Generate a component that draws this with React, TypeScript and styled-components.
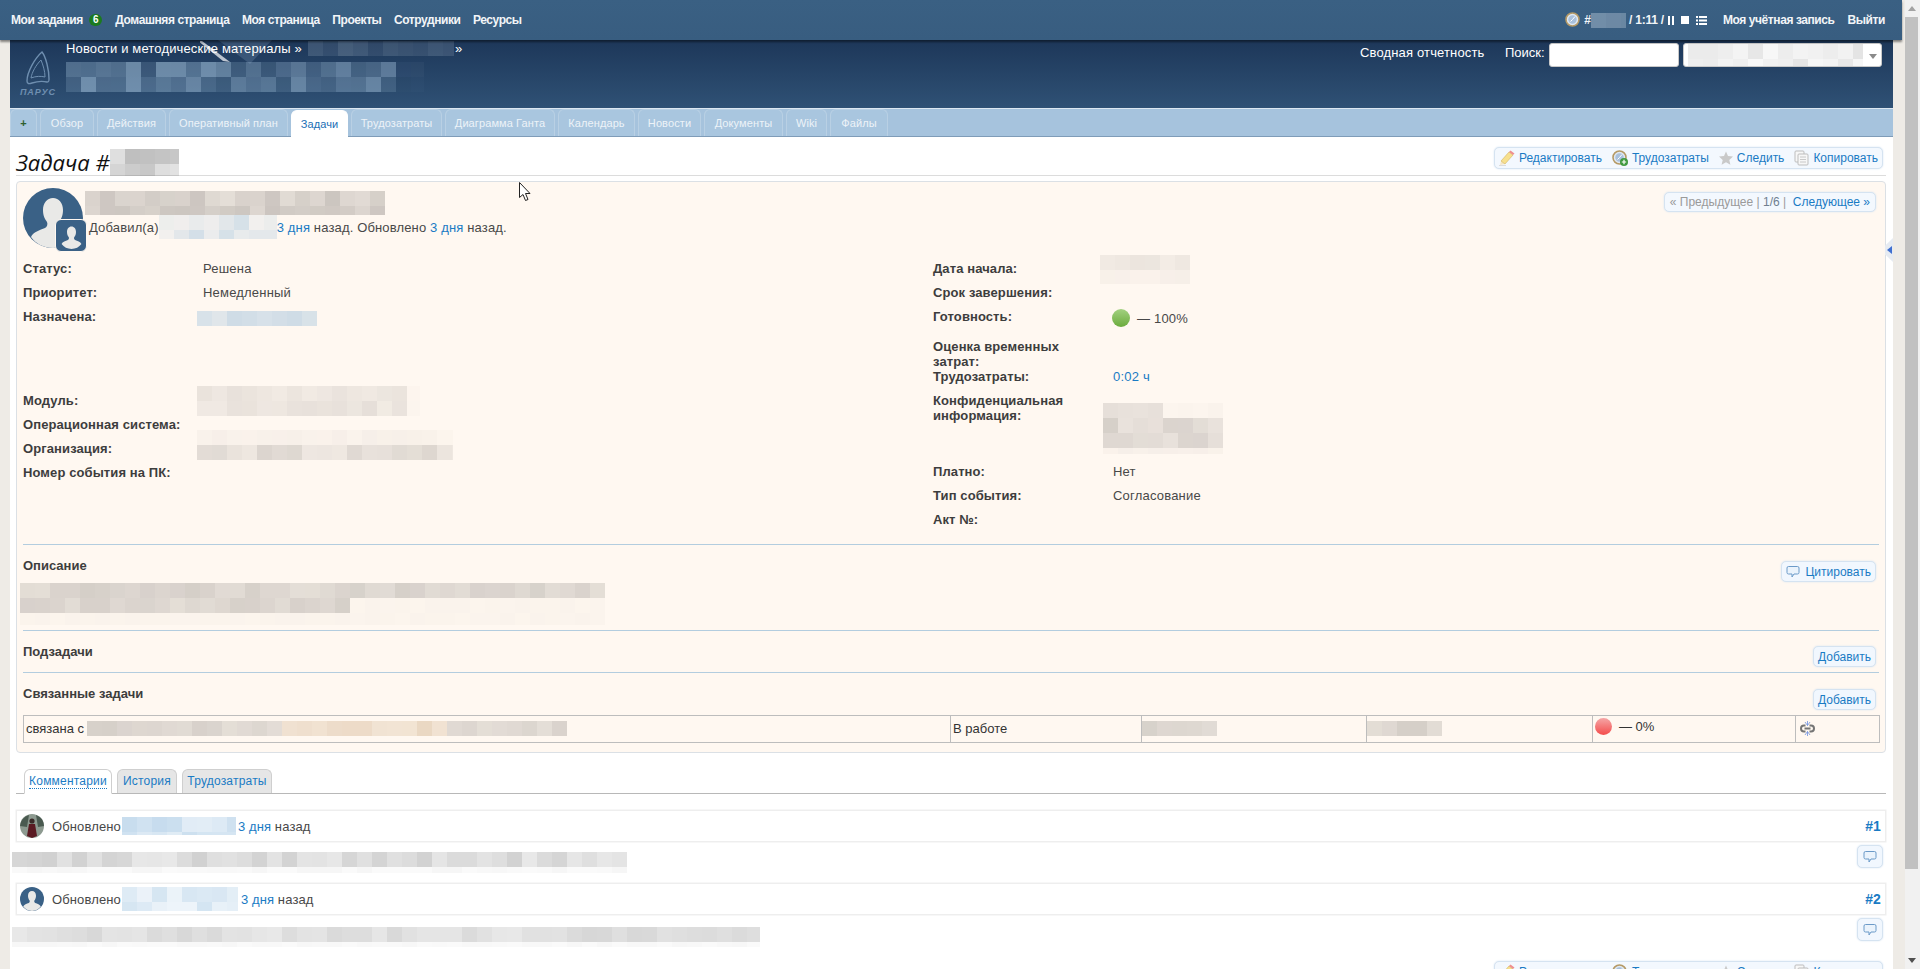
import styled, { createGlobalStyle } from 'styled-components';

const GlobalStyle = createGlobalStyle`
  html, body {
    margin: 0;
    padding: 0;
    height: 100%;
    overflow: hidden;
    background: #eeebe6;
  }
  body {
    font-family: "Liberation Sans", Arial, sans-serif;
    font-size: 12px;
    color: #484848;
  }
  a { color: #1a7bc4; text-decoration: none; }
`;

const Shell = styled.div`
  display: flex;
  height: 969px;
  overflow: hidden;
`;

const Page = styled.div`
  flex: 1;
  min-width: 0;
  display: flex;
  flex-direction: column;
  overflow: hidden;
`;

/* scrollbar of the window */
const ScrollTrack = styled.div`
  flex: none;
  width: 15px;
  background: #f1f1f1;
  display: flex;
  flex-direction: column;
`;
const ScrollArrow = styled.div<{ $down?: boolean }>`
  flex: none;
  height: 17px;
  display: flex;
  align-items: center;
  justify-content: center;
  padding-right: 1px;
  &::before {
    content: '';
    border-left: 4px solid transparent;
    border-right: 4px solid transparent;
    ${p => (p.$down ? 'border-top: 5px solid #505050;' : 'border-bottom: 5px solid #a3a3a3;')}
  }
`;
const ScrollThumb = styled.div`
  flex: none;
  width: 13px;
  height: 852px;
  background: #c1c1c1;
`;
const ScrollRest = styled.div`
  flex: 1;
`;

/* top menu */
const TopBar = styled.div`
  position: relative;
  z-index: 2;
  flex: none;
  height: 40px;
  margin-right: 3px;
  padding: 0 17px 0 11px;
  box-sizing: border-box;
  display: flex;
  align-items: center;
  background: linear-gradient(#3a6083, #385d80);
  box-shadow: 0 2px 2px rgba(0, 0, 0, 0.45);
  color: #f2f5f8;
  font-weight: bold;
`;
const TopLink = styled.span`
  margin-right: 12.5px;
  letter-spacing: -0.42px;
`;
const TopBadge = styled.span`
  width: 13px;
  height: 12px;
  margin: 0 13px 0 -6px;
  border-radius: 6px;
  background: #1b7a1f;
  color: #fff;
  font-size: 10px;
  line-height: 12px;
  text-align: center;
`;
const TopRight = styled.div`
  margin-left: auto;
  display: flex;
  align-items: center;
`;
const TimerText = styled.span`
  white-space: pre;
  letter-spacing: -0.2px;
`;
const AccountLink = styled.span`
  margin-left: 13px;
  letter-spacing: -0.42px;
`;
const TimerIcons = styled.span`
  display: flex;
  align-items: center;
  gap: 7px;
  margin: 0 3px 0 4px;
`;

/* project header */
const Wrapper = styled.div`
  flex: 1;
  margin: 0 12px 0 10px;
  background: #fff;
  min-height: 0;
  display: flex;
  flex-direction: column;
`;
const Header = styled.div`
  position: relative;
  flex: none;
  height: 68px;
  display: flex;
  background: linear-gradient(#1d3759, #2f5175);
  color: #fff;
`;
const LogoCol = styled.div`
  flex: none;
  width: 36px;
  margin: 0 10px;
  padding-top: 11px;
  display: flex;
  flex-direction: column;
  align-items: center;
`;
const LogoWord = styled.span`
  margin-top: 3px;
  color: #6f8fb0;
  font-size: 9px;
  font-style: italic;
  font-weight: bold;
  letter-spacing: 1px;
  line-height: 9px;
`;
const Streak = styled.svg`
  position: absolute;
  left: 190px;
  top: 0;
`;
const CrumbCol = styled.div`
  position: relative;
  flex: 1;
  padding-top: 1px;
`;
const CrumbRow = styled.div`
  display: flex;
  align-items: center;
  height: 15px;
  margin-bottom: 6px;
  font-size: 13px;
  letter-spacing: 0.15px;
`;
const SearchCol = styled.div`
  flex: none;
  width: 522px;
  margin-right: 11px;
  padding-top: 3px;
  display: flex;
  align-items: flex-start;
  line-height: 20px;
  font-size: 13px;
`;
const ReportLink = styled.span`
  width: 145px;
  letter-spacing: 0.15px;
`;
const SearchLabel = styled.span`
  width: 44px;
`;
const SearchInput = styled.div`
  width: 130px;
  height: 24px;
  margin-right: 4px;
  box-sizing: border-box;
  background: #fff;
  border: 1px solid #c8c8c8;
  border-radius: 3px;
`;
const SearchSelect = styled(SearchInput)`
  position: relative;
  width: 199px;
  margin: 0;
  padding-left: 4px;
  overflow: hidden;
  &::after {
    content: '';
    position: absolute;
    right: 4px;
    top: 10px;
    border-left: 4px solid transparent;
    border-right: 4px solid transparent;
    border-top: 5px solid #8a8a8a;
  }
`;

/* main tabs */
const TabBar = styled.div`
  flex: none;
  height: 29px;
  box-sizing: border-box;
  display: flex;
  align-items: flex-end;
  gap: 3px;
  background: #a6c3dd;
  border-top: 1px solid #dce7f1;
  border-bottom: 1px solid #7f9cb8;
`;
const MainTab = styled.div<{ $active?: boolean; $w: number }>`
  width: ${p => p.$w}px;
  height: 27px;
  box-sizing: border-box;
  text-align: center;
  border-radius: 6px 6px 0 0;
  background: ${p => (p.$active ? '#fff' : '#a9c6df')};
  border: 1px solid ${p => (p.$active ? '#fff' : '#b9d0e4')};
  border-bottom: none;
  color: ${p => (p.$active ? '#1a6fb5' : '#edf3f8')};
  font-size: 11px;
  line-height: 26px;
  letter-spacing: 0.1px;
  margin-bottom: ${p => (p.$active ? '-1px' : '0')};
`;
const PlusTab = styled(MainTab)`
  color: #2f5f2f;
  font-weight: bold;
`;

/* content */
const Content = styled.div`
  flex: 1;
  min-height: 0;
  padding: 0 7px 0 6px;
`;
const TitleRow = styled.div`
  height: 39px;
  box-sizing: border-box;
  display: flex;
  align-items: flex-start;
  justify-content: space-between;
  border-bottom: 1px solid #dcdcdc;
`;
const Title = styled.h2`
  margin: 12px 0 0;
  display: flex;
  align-items: center;
  height: 26px;
  color: #111;
  font-family: "Open Sans", sans-serif;
  font-size: 22px;
  font-style: italic;
  font-weight: 400;
`;
const ContextBox = styled.div<{ $top: number }>`
  flex: none;
  margin: ${p => p.$top}px 3px 0 0;
  height: 22px;
  box-sizing: border-box;
  padding: 0 4px 0 4px;
  display: flex;
  align-items: center;
  background: #f3f8fe;
  border: 1px solid #d5e3f1;
  border-radius: 5px;
  box-shadow: 0 0 2px #d5e3f1;
`;
const ContextItem = styled.a`
  display: flex;
  align-items: center;
  gap: 4px;
  margin-right: 10px;
  &:last-child { margin-right: 0; }
`;
const IssueBox = styled.div`
  margin-top: 5px;
  height: 572px;
  box-sizing: border-box;
  padding: 6px 6px 0;
  background: #fff8f1;
  border: 1px solid #dbe0e5;
  border-radius: 4px;
`;
const IssueHead = styled.div`
  height: 69px;
  display: flex;
`;
const AvatarHolder = styled.div`
  position: relative;
  flex: none;
  width: 60px;
  height: 60px;
  margin-right: 2px;
`;
const AvatarBadge = styled.div`
  position: absolute;
  left: 32px;
  top: 31px;
  width: 32px;
  height: 33px;
  box-sizing: border-box;
  background: #3a6186;
  border: 1px solid #fff8f1;
  border-radius: 6px;
  display: flex;
  align-items: center;
  justify-content: center;
`;
const HeadText = styled.div`
  flex: 1;
  padding-top: 3px;
`;
const MetaLine = styled.div`
  display: flex;
  align-items: center;
  height: 24px;
  padding-left: 4px;
  white-space: pre;
  font-size: 13px;
  letter-spacing: 0.15px;
`;
const Pager = styled.div`
  flex: none;
  align-self: flex-start;
  height: 20px;
  margin: 4px 3px 0 0;
  padding: 0 5px;
  box-sizing: border-box;
  line-height: 18px;
  white-space: pre;
  color: #9a9a9a;
  background: #f3f8fe;
  border: 1px solid #d5e3f1;
  border-radius: 5px;
  box-shadow: 0 0 2px #d5e3f1;
`;
const PagerCount = styled.span`
  color: #6f7f90;
`;
const AttrGrid = styled.div`
  height: 287px;
  display: flex;
`;
const AttrCol = styled.div<{ $w?: number }>`
  ${p => (p.$w ? `width: ${p.$w}px;` : 'flex: 1;')}
`;
const Attr = styled.div<{ $h?: number; $flush?: boolean }>`
  height: ${p => p.$h || 24}px;
  display: flex;
  padding-top: ${p => (p.$flush ? 0 : 4)}px;
  box-sizing: border-box;
  line-height: 15px;
  font-size: 13px;
`;
const AttrLabel = styled.div<{ $w?: number }>`
  flex: none;
  width: ${p => p.$w || 150}px;
  margin-right: ${p => 180 - (p.$w || 150)}px;
  font-weight: bold;
  color: #3d3d3d;
  letter-spacing: 0.1px;
`;
const AttrValue = styled.div`
  letter-spacing: 0.2px;
`;
const DoneValue = styled.div`
  display: flex;
  align-items: center;
  gap: 7px;
  height: 18px;
  margin-left: -1px;
  letter-spacing: 0.2px;
`;
const Ball = styled.span<{ $done?: boolean }>`
  flex: none;
  width: 18px;
  height: 18px;
  border-radius: 50%;
  background: ${p => (p.$done
    ? 'linear-gradient(#a3d181, #6bab3c)'
    : 'linear-gradient(#f5a6a6, #f44c4c)')};
`;
const Section = styled.div<{ $h: number }>`
  height: ${p => p.$h}px;
  box-sizing: border-box;
  display: flex;
  justify-content: space-between;
  border-top: 1px solid #b3cddf;
`;
const SectionBody = styled.div`
  flex: 1;
  min-width: 0;
  padding-top: 13px;
`;
const SectionTitle = styled.div`
  font-size: 13px;
  font-weight: bold;
  line-height: 15px;
  color: #3d3d3d;
`;
const MiniButton = styled.a<{ $top: number }>`
  flex: none;
  align-self: flex-start;
  height: 21px;
  margin: ${p => p.$top}px 3px 0 0;
  padding: 0 4px;
  box-sizing: border-box;
  display: flex;
  align-items: center;
  gap: 5px;
  background: #f1f7fe;
  border: 1px solid #d5e3f1;
  border-radius: 5px;
  box-shadow: 0 0 2px #d5e3f1;
`;
const RelationTable = styled.table`
  width: 1856px;
  table-layout: fixed;
  border-collapse: collapse;
  border: 1px solid #bdbdbd;
  margin-top: 14px;
  color: #333;
  font-size: 13px;
`;
const RelationCell = styled.td<{ $w: number }>`
  box-sizing: border-box;
  width: ${p => p.$w}px;
  height: 27px;
  padding: 0 2px 2px;
  border-left: 1px solid #bdbdbd;
  vertical-align: middle;
`;
const CellRow = styled.div<{ $top?: boolean }>`
  display: flex;
  align-items: center;
  white-space: pre;
  ${p => (p.$top ? 'margin-top: -4px;' : '')}
`;
const ProgressBall = styled(Ball)`
  width: 17px;
  height: 17px;
  margin-right: 7px;
`;
const UnlinkSlot = styled.span`
  display: flex;
  margin-left: 2px;
`;

/* comments */
const SubTabs = styled.div`
  margin-top: 16px;
  height: 25px;
  box-sizing: border-box;
  padding-left: 8px;
  display: flex;
  align-items: flex-end;
  gap: 5px;
  border-bottom: 1px solid #b8b8b8;
`;
const SubTab = styled.a<{ $active?: boolean; $w: number }>`
  width: ${p => p.$w}px;
  height: 24px;
  box-sizing: border-box;
  padding-top: 4px;
  text-align: center;
  border: 1px solid #cfcfcf;
  border-radius: 6px 6px 0 0;
  background: ${p => (p.$active ? '#fff' : '#e6e6e6')};
  ${p => (p.$active ? 'border-bottom: 1px solid #fff; margin-bottom: -1px; height: 25px;' : 'border-bottom: none;')}
  letter-spacing: 0.2px;
`;
const Dotted = styled.span`
  border-bottom: 1px dotted #1a7bc4;
`;
const JournalHead = styled.div<{ $top: number }>`
  margin-top: ${p => p.$top}px;
  height: 32px;
  box-sizing: border-box;
  padding: 0 4px 0 3px;
  display: flex;
  align-items: center;
  border: 1px solid #eee;
  box-shadow: 0 0 0 0.5px #eee;
  white-space: pre;
  font-size: 13px;
  letter-spacing: 0.12px;
`;
const JournalAvatar = styled.span`
  flex: none;
  display: flex;
  margin-right: 8px;
`;
const JournalNumber = styled.a`
  margin-left: auto;
  font-size: 14px;
  font-weight: bold;
`;
const JournalBody = styled.div<{ $h: number }>`
  position: relative;
  height: ${p => p.$h}px;
  margin-left: -4px;
  display: flex;
  justify-content: space-between;
`;
const QuoteButton = styled.a`
  flex: none;
  width: 26px;
  height: 23px;
  margin: 3px 3px 0 0;
  box-sizing: border-box;
  display: flex;
  align-items: center;
  justify-content: center;
  background: #f1f7fe;
  border: 1px solid #d5e3f1;
  border-radius: 5px;
  box-shadow: 0 0 2px #d5e3f1;
`;
const BottomContext = styled.div`
  display: flex;
  justify-content: flex-end;
`;
const SideHandle = styled.div`
  position: absolute;
  left: 1885px;
  top: 238px;
  width: 8px;
  height: 24px;
  box-sizing: border-box;
  background: #e6ebf2;
  clip-path: polygon(100% 0, 100% 100%, 0 68%, 0 32%);
  display: flex;
  align-items: center;
  justify-content: flex-end;
  padding-right: 1px;
  &::before {
    content: '';
    border-top: 4px solid transparent;
    border-bottom: 4px solid transparent;
    border-right: 5px solid #3f6fd0;
  }
`;
const CursorMark = styled.svg`
  position: absolute;
  left: 519px;
  top: 182px;
`;

/* pixelated (blurred out) parts of the picture */
const MosaicBox = styled.span<{ $w: number; $h: number; $m?: string }>`
  flex: none;
  display: block;
  width: ${p => p.$w}px;
  height: ${p => p.$h}px;
  margin: ${p => p.$m || 0};
  overflow: hidden;
`;
const MosaicRow = styled.span`
  display: flex;
  height: 15px;
`;
const MosaicCell = styled.span`
  flex: none;
  width: 15px;
  height: 15px;
`;

type MosaicProps = {
  w: number;
  h: number;
  tone: string;
  seed: number;
  lo?: number;
  hi?: number;
  m?: string;
  rows?: number[];
  widths?: number[];
};

const Mosaic = ({ w, h, tone, seed, lo = 0.25, hi = 0.45, m, rows, widths }: MosaicProps) => {
  let s = seed * 7919 + 13;
  const next = () => {
    s = (s * 16807) % 2147483647;
    return (s % 1000) / 1000;
  };
  const rowCount = Math.ceil(h / 15);
  const colCount = Math.ceil(w / 15);
  return (
    <MosaicBox $w={w} $h={h} $m={m}>
      {Array.from({ length: rowCount }).map((_, r) => (
        <MosaicRow key={r}>
          {Array.from({ length: colCount }).map((_, c) => {
            const fade = rows ? rows[r] ?? 1 : 1;
            const cut = widths ? widths[r] ?? w : w;
            const a = (lo + (hi - lo) * next()) * (c * 15 < cut ? fade : 0.12);
            return <MosaicCell key={c} style={{ background: `rgba(${tone},${a.toFixed(3)})` }} />;
          })}
        </MosaicRow>
      ))}
    </MosaicBox>
  );
};

const GREY = '150,145,140';
const BEIGE = '205,170,130';
const BLUE = '110,165,210';
const COOL = '140,140,140';

const Silhouette = ({ size, round = true }: { size: number; round?: boolean }) => (
  <svg width={size} height={size} viewBox="0 0 60 60">
    {round && <circle cx="30" cy="30" r="30" fill="#3a6186" />}
    <path
      d="M30 10c-6 0-10 5-10 12 0 6 2 9 4 12 1 2 0 5-2 6-5 2-12 4-14 9 5 7 13 11 22 11s17-4 22-11c-2-5-9-7-14-9-2-1-3-4-2-6 2-3 4-6 4-12 0-7-4-12-10-12z"
      fill="#e9e9e7"
    />
  </svg>
);

const PhotoAvatar = () => (
  <svg width="24" height="24" viewBox="0 0 24 24">
    <circle cx="12" cy="12" r="12" fill="#8d9a90" />
    <path d="M0 12a12 12 0 0 1 9-11l-2 12zM24 12a12 12 0 0 0-8-11l2 12z" fill="#4a5a50" />
    <circle cx="12" cy="7" r="2.6" fill="#3a2a28" />
    <path d="M9 10h6l2 12-5 2-5-2z" fill="#5a1a22" />
  </svg>
);

const PencilIcon = () => (
  <svg width="16" height="16" viewBox="0 0 16 16">
    <path d="M1 15l5-1-4-3z" fill="#f5e6c4" />
    <path d="M2 11l8-9 4 3-8 9z" fill="#f7e08e" stroke="#cda84f" strokeWidth="0.5" />
    <path d="M10 2l1.5-1.5 4 3L14 5z" fill="#ef8f8f" />
    <path d="M0 15.5h7" stroke="#dcdcdc" />
  </svg>
);

const ClockIcon = ({ plus }: { plus?: boolean }) => (
  <svg width="16" height="16" viewBox="0 0 16 16">
    <circle cx="7.5" cy="7.5" r="6.5" fill="#dfe8f2" stroke="#b59a66" strokeWidth="1.6" />
    <circle cx="7.5" cy="7.5" r="4.2" fill="#a9c1dc" />
    <path d="M7.5 7.5L10 4.5M7.5 7.5L5.5 9.5" stroke="#fff" strokeWidth="1" />
    {plus && <circle cx="12" cy="12" r="4" fill="#3f9a3f" />}
    {plus && <path d="M12 9.8v4.4M9.8 12h4.4" stroke="#fff" strokeWidth="1.2" />}
  </svg>
);

const StarIcon = () => (
  <svg width="14" height="14" viewBox="0 0 14 14">
    <path d="M7 0.5l2 4.6 5 .5-3.7 3.3 1.1 4.9L7 11.3l-4.4 2.5 1.1-4.9L0 5.6l5-.5z" fill="#c9c9c9" />
  </svg>
);

const CopyIcon = () => (
  <svg width="15" height="16" viewBox="0 0 15 16" fill="#f7f7f7" stroke="#bdbdbd">
    <rect x="1" y="1" width="9" height="11" rx="1" />
    <rect x="4" y="4" width="10" height="11" rx="1" />
    <path d="M6 7h6M6 9.5h6M6 12h6" strokeWidth="0.8" />
  </svg>
);

const BubbleIcon = () => (
  <svg width="14" height="14" viewBox="0 0 14 14">
    <path
      d="M2.5 1.5h9a1.5 1.5 0 0 1 1.5 1.5v4.5a1.5 1.5 0 0 1-1.5 1.5H8L6 12V9H2.5A1.5 1.5 0 0 1 1 7.5V3a1.5 1.5 0 0 1 1.5-1.5z"
      fill="#eaf3fc"
      stroke="#6b9ac8"
    />
  </svg>
);

const UnlinkIcon = () => (
  <svg width="15" height="15" viewBox="0 0 15 15">
    <path d="M5.5 4.5H4a3 3 0 0 0 0 6h1.5M9.5 4.5H11a3 3 0 0 1 0 6H9.5M4.5 7.5h6" fill="none" stroke="#757575" strokeWidth="2" />
    <path d="M7.5 0v4.5M7.5 10.5V15M5 1l2.5 3.5L10 1M5 14l2.5-3.5L10 14" fill="none" stroke="#6d8fe0" strokeWidth="0.8" />
  </svg>
);

const ContextLinks = ({ top }: { top: number }) => (
  <ContextBox $top={top}>
    <ContextItem><PencilIcon />Редактировать</ContextItem>
    <ContextItem><ClockIcon plus />Трудозатраты</ContextItem>
    <ContextItem><StarIcon />Следить</ContextItem>
    <ContextItem><CopyIcon />Копировать</ContextItem>
  </ContextBox>
);

const App = () => (
  <>
    <GlobalStyle />
    <Shell>
      <Page>
        <TopBar>
          <TopLink>Мои задания</TopLink>
          <TopBadge>6</TopBadge>
          <TopLink>Домашняя страница</TopLink>
          <TopLink>Моя страница</TopLink>
          <TopLink>Проекты</TopLink>
          <TopLink>Сотрудники</TopLink>
          <TopLink>Ресурсы</TopLink>
          <TopRight>
            <ClockIcon />
            <TimerText> #</TimerText>
            <Mosaic w={35} h={15} tone="190,205,220" seed={3} lo={0.35} hi={0.55} />
            <TimerText> / 1:11 /</TimerText>
            <TimerIcons>
              <svg width="6" height="9" viewBox="0 0 6 9" fill="#fff">
                <rect x="0" width="2" height="9" />
                <rect x="4" width="2" height="9" />
              </svg>
              <svg width="8" height="8" viewBox="0 0 8 8" fill="#fff">
                <rect width="8" height="8" />
              </svg>
              <svg width="11" height="9" viewBox="0 0 11 9" fill="#fff">
                <rect y="0" width="2" height="2" />
                <rect y="3.5" width="2" height="2" />
                <rect y="7" width="2" height="2" />
                <rect x="3" y="0" width="8" height="2" />
                <rect x="3" y="3.5" width="8" height="2" />
                <rect x="3" y="7" width="8" height="2" />
              </svg>
            </TimerIcons>
            <AccountLink>Моя учётная запись</AccountLink>
            <AccountLink>Выйти</AccountLink>
          </TopRight>
        </TopBar>
        <Wrapper>
          <Header>
            <LogoCol>
              <svg width="24" height="34" viewBox="0 0 24 34" fill="none" stroke="#6f8fb0">
                <path d="M16 1C9 7 1 21 1 30c0 3 2 3 5 2 6-2 11-2 15-1 2 0 2-1 2-3C23 19 20 6 16 1z" strokeWidth="1.4" />
                <path d="M15 9C10 14 6 21 5 27c5-2 10-2 14-1 0-6-2-12-4-17z" strokeWidth="1" />
              </svg>
              <LogoWord>ПАРУС</LogoWord>
            </LogoCol>
            <Streak width="100" height="26" viewBox="0 0 100 26">
              <path d="M18 0h54L50 24z" fill="rgba(160,190,220,0.2)" />
              <path d="M2 1l28 21-7-1L-2 1z" fill="rgba(255,255,255,0.7)" />
            </Streak>
            <CrumbCol>
              <CrumbRow>
                Новости и методические материалы »
                <Mosaic w={146} h={15} tone="190,205,220" seed={5} lo={0.1} hi={0.25} m="0 1px 0 6px" />
                »
              </CrumbRow>
              <Mosaic w={358} h={30} tone="170,200,225" seed={11} lo={0.15} hi={0.55} widths={[329, 329]} />
            </CrumbCol>
            <SearchCol>
              <ReportLink>Сводная отчетность</ReportLink>
              <SearchLabel>Поиск:</SearchLabel>
              <SearchInput />
              <SearchSelect>
                <Mosaic w={175} h={22} tone={COOL} seed={17} lo={0.05} hi={0.25} />
              </SearchSelect>
            </SearchCol>
          </Header>
          <TabBar>
            <PlusTab $w={27}>+</PlusTab>
            <MainTab $w={54}>Обзор</MainTab>
            <MainTab $w={69}>Действия</MainTab>
            <MainTab $w={119}>Оперативный план</MainTab>
            <MainTab $w={57} $active>Задачи</MainTab>
            <MainTab $w={91}>Трудозатраты</MainTab>
            <MainTab $w={110}>Диаграмма Ганта</MainTab>
            <MainTab $w={77}>Календарь</MainTab>
            <MainTab $w={63}>Новости</MainTab>
            <MainTab $w={79}>Документы</MainTab>
            <MainTab $w={41}>Wiki</MainTab>
            <MainTab $w={58}>Файлы</MainTab>
          </TabBar>
          <Content>
            <TitleRow>
              <Title>
                Задача #
                <Mosaic w={69} h={27} tone="120,120,120" seed={21} lo={0.2} hi={0.5} />
              </Title>
              <ContextLinks top={10} />
            </TitleRow>
            <IssueBox>
              <IssueHead>
                <AvatarHolder>
                  <Silhouette size={60} />
                  <AvatarBadge>
                    <Silhouette size={27} round={false} />
                  </AvatarBadge>
                </AvatarHolder>
                <HeadText>
                  <Mosaic w={300} h={24} tone={GREY} seed={23} lo={0.25} hi={0.5} />
                  <MetaLine>
                    Добавил(а)
                    <Mosaic w={118} h={24} tone={BLUE} seed={29} lo={0.08} hi={0.3} />
                    <a>3 дня</a> назад. Обновлено <a>3 дня</a> назад.
                  </MetaLine>
                </HeadText>
                <Pager>
                  « Предыдущее | <PagerCount>1/6</PagerCount> |  <a>Следующее »</a>
                </Pager>
              </IssueHead>
              <AttrGrid>
                <AttrCol $w={910}>
                  <Attr>
                    <AttrLabel>Статус:</AttrLabel>
                    <AttrValue>Решена</AttrValue>
                  </Attr>
                  <Attr>
                    <AttrLabel>Приоритет:</AttrLabel>
                    <AttrValue>Немедленный</AttrValue>
                  </Attr>
                  <Attr $h={84}>
                    <AttrLabel>Назначена:</AttrLabel>
                    <Mosaic w={120} h={15} tone={BLUE} seed={31} lo={0.2} hi={0.35} m="2px 0 0 -6px" />
                  </Attr>
                  <Attr>
                    <AttrLabel>Модуль:</AttrLabel>
                    <Mosaic w={223} h={30} tone={GREY} seed={37} lo={0.12} hi={0.25} m="-7px 0 0 -6px" widths={[210, 210]} />
                  </Attr>
                  <Attr>
                    <AttrLabel $w={175}>Операционная система:</AttrLabel>
                  </Attr>
                  <Attr>
                    <AttrLabel>Организация:</AttrLabel>
                    <Mosaic w={256} h={30} tone={GREY} seed={41} lo={0.15} hi={0.35} m="-11px 0 0 -6px" rows={[0.3, 1]} widths={[240, 256]} />
                  </Attr>
                  <Attr>
                    <AttrLabel $w={175}>Номер события на ПК:</AttrLabel>
                  </Attr>
                </AttrCol>
                <AttrCol>
                  <Attr>
                    <AttrLabel>Дата начала:</AttrLabel>
                    <Mosaic w={90} h={29} tone={GREY} seed={43} lo={0.08} hi={0.22} m="-6px 0 0 -13px" rows={[1, 0.5]} />
                  </Attr>
                  <Attr>
                    <AttrLabel>Срок завершения:</AttrLabel>
                  </Attr>
                  <Attr $h={34}>
                    <AttrLabel>Готовность:</AttrLabel>
                    <DoneValue>
                      <Ball $done />
                      — 100%
                    </DoneValue>
                  </Attr>
                  <Attr $h={30} $flush>
                    <AttrLabel>Оценка временных затрат:</AttrLabel>
                  </Attr>
                  <Attr $h={24} $flush>
                    <AttrLabel>Трудозатраты:</AttrLabel>
                    <AttrValue><a>0:02 ч</a></AttrValue>
                  </Attr>
                  <Attr $h={67} $flush>
                    <AttrLabel>Конфиденциальная информация:</AttrLabel>
                    <Mosaic w={120} h={51} tone={GREY} seed={47} lo={0.2} hi={0.4} m="10px 0 0 -10px" rows={[0.6, 1, 1, 0.25]} widths={[60, 120, 120, 120]} />
                  </Attr>
                  <Attr>
                    <AttrLabel>Платно:</AttrLabel>
                    <AttrValue>Нет</AttrValue>
                  </Attr>
                  <Attr>
                    <AttrLabel>Тип события:</AttrLabel>
                    <AttrValue>Согласование</AttrValue>
                  </Attr>
                  <Attr>
                    <AttrLabel>Акт №:</AttrLabel>
                  </Attr>
                </AttrCol>
              </AttrGrid>
              <Section $h={86}>
                <SectionBody>
                  <SectionTitle>Описание</SectionTitle>
                  <Mosaic w={585} h={42} tone={GREY} seed={53} lo={0.25} hi={0.4} m="10px 0 0 -3px" rows={[1, 1, 0.12]} widths={[585, 320, 585]} />
                </SectionBody>
                <MiniButton $top={16}><BubbleIcon />Цитировать</MiniButton>
              </Section>
              <Section $h={42}>
                <SectionBody>
                  <SectionTitle>Подзадачи</SectionTitle>
                </SectionBody>
                <MiniButton $top={15}>Добавить</MiniButton>
              </Section>
              <Section $h={80}>
                <SectionBody>
                  <SectionTitle>Связанные задачи</SectionTitle>
                  <RelationTable>
                    <tbody>
                      <tr>
                        <RelationCell $w={927}>
                          <CellRow>
                            связана с
                            <Mosaic w={195} h={15} tone={GREY} seed={59} lo={0.25} hi={0.4} m="0 0 0 3px" />
                            <Mosaic w={165} h={15} tone={BEIGE} seed={61} lo={0.25} hi={0.5} />
                            <Mosaic w={120} h={15} tone={GREY} seed={67} lo={0.25} hi={0.4} />
                          </CellRow>
                        </RelationCell>
                        <RelationCell $w={191}>В работе</RelationCell>
                        <RelationCell $w={225}>
                          <Mosaic w={75} h={15} tone={GREY} seed={71} lo={0.25} hi={0.4} m="0 0 0 -2px" />
                        </RelationCell>
                        <RelationCell $w={226}>
                          <Mosaic w={75} h={15} tone={GREY} seed={73} lo={0.25} hi={0.4} m="0 0 0 -2px" />
                        </RelationCell>
                        <RelationCell $w={203}>
                          <CellRow $top>
                            <ProgressBall />
                            — 0%
                          </CellRow>
                        </RelationCell>
                        <RelationCell $w={84}>
                          <CellRow><UnlinkSlot><UnlinkIcon /></UnlinkSlot></CellRow>
                        </RelationCell>
                      </tr>
                    </tbody>
                  </RelationTable>
                </SectionBody>
                <MiniButton $top={16}>Добавить</MiniButton>
              </Section>
            </IssueBox>
            <SubTabs>
              <SubTab $w={88} $active><Dotted>Комментарии</Dotted></SubTab>
              <SubTab $w={60}>История</SubTab>
              <SubTab $w={90}>Трудозатраты</SubTab>
            </SubTabs>
            <JournalHead $top={16}>
              <JournalAvatar><PhotoAvatar /></JournalAvatar>
              Обновлено
              <Mosaic w={114} h={18} tone={BLUE} seed={79} lo={0.2} hi={0.4} m="0 2px 0 1px" />
              <a>3 дня</a> назад
              <JournalNumber>#1</JournalNumber>
            </JournalHead>
            <JournalBody $h={41}>
              <Mosaic w={615} h={21} tone={COOL} seed={83} lo={0.2} hi={0.4} m="10px 0 0 0" rows={[1, 0.2]} />
              <QuoteButton><BubbleIcon /></QuoteButton>
            </JournalBody>
            <JournalHead $top={0}>
              <JournalAvatar><Silhouette size={24} /></JournalAvatar>
              Обновлено
              <Mosaic w={116} h={24} tone={BLUE} seed={89} lo={0.12} hi={0.3} m="0 3px 0 1px" />
              <a>3 дня</a> назад
              <JournalNumber>#2</JournalNumber>
            </JournalHead>
            <JournalBody $h={45}>
              <Mosaic w={748} h={20} tone={COOL} seed={97} lo={0.2} hi={0.35} m="12px 0 0 0" rows={[1, 0.2]} />
              <QuoteButton><BubbleIcon /></QuoteButton>
            </JournalBody>
            <BottomContext>
              <ContextLinks top={1} />
            </BottomContext>
          </Content>
        </Wrapper>
      </Page>
      <ScrollTrack>
        <ScrollArrow />
        <ScrollThumb />
        <ScrollRest />
        <ScrollArrow $down />
      </ScrollTrack>
    </Shell>
    <SideHandle />
    <CursorMark width="12" height="20" viewBox="0 0 12 20">
      <path d="M0.5 0.5v15l3.5-3 2.5 6 2.5-1-2.5-6h4.5z" fill="#fff" stroke="#222" strokeWidth="1" />
    </CursorMark>
  </>
);

export default App;
